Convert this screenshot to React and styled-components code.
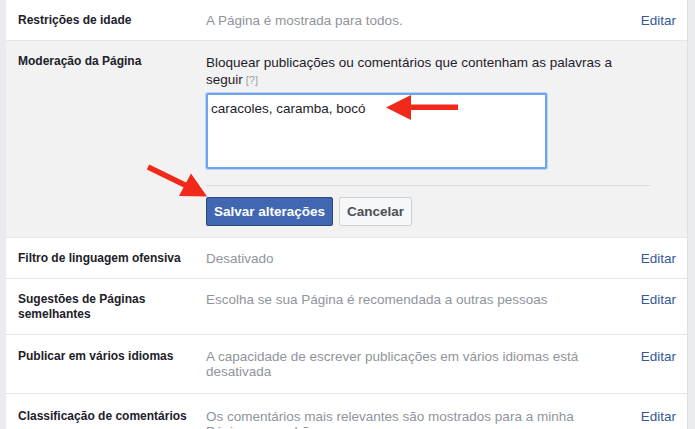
import React from 'react';
import styled, { createGlobalStyle } from 'styled-components';

const GlobalStyle = createGlobalStyle`
  html, body {
    margin: 0;
    padding: 0;
    background: #e9ebee;
    font-family: "Liberation Sans", Arial, Helvetica, sans-serif;
    -webkit-font-smoothing: antialiased;
  }
`;

const Page = styled.div`
  position: relative;
  width: 695px;
  height: 429px;
  overflow: hidden;
  background: #e9ebee;
`;

// painel branco com as linhas de configuração
const Panel = styled.div`
  margin-left: 6px;
  width: 681px;
  background: #fff;
  border-right: 1px solid #dddfe2;
  min-height: 429px;
`;

const Row = styled.div`
  display: flex;
  align-items: flex-start;
  padding: ${p => p.$top || 13}px 11px ${p => p.$bottom || 12}px 12px;
  border-bottom: 1px solid #e5e5e5;
  background: ${p => (p.$open ? '#f2f2f2' : '#fff')};
  font-size: 12px;
  line-height: 15px;
`;

const Label = styled.div`
  width: 188px;
  flex-shrink: 0;
  font-weight: bold;
  color: #1d2129;
  padding-right: 12px;
  box-sizing: border-box;
`;

const Value = styled.div`
  width: 412px;
  color: #90949c;
  font-size: 13.5px;
`;

const Edit = styled.a`
  margin-left: auto;
  color: #365899;
  font-size: 13.5px;
  cursor: pointer;
`;

// área de edição aberta
const Editor = styled.div`
  flex: 1;
  margin-right: 25px;
  display: flex;
  flex-direction: column;
`;

const Description = styled.div`
  color: #1d2129;
  font-size: 13.5px;
  line-height: 17px;
  width: 420px;
`;

const Help = styled.span`
  display: inline-block;
  color: #a0a4ab;
  font-size: 11px;
  line-height: 12px;
  margin-left: 3px;
`;

const Words = styled.textarea`
  margin-top: 5px;
  width: 341px;
  height: 76px;
  box-sizing: border-box;
  resize: none;
  border: 2px solid #6fa3ea;
  box-shadow: 0 0 0 1px #b9d3f5;
  border-radius: 2px;
  padding: 6px 3px;
  font-family: "Liberation Sans", Arial, sans-serif;
  font-size: 13.5px;
  line-height: 15px;
  color: #1d2129;
  outline: none;
`;

const Divider = styled.div`
  margin-top: 16px;
  height: 1px;
  background: #dddfe2;
`;

const Buttons = styled.div`
  margin-top: 11px;
  display: flex;
  gap: 6px;
`;

const Button = styled.button`
  height: 29px;
  padding: 0 7px;
  border-radius: 2px;
  font-family: "Liberation Sans", Arial, sans-serif;
  font-weight: bold;
  font-size: 13.5px;
  border: 1px solid ${p => (p.$primary ? '#29487d' : '#ced0d4')};
  background: ${p => (p.$primary ? '#4267b2' : '#f6f7f9')};
  color: ${p => (p.$primary ? '#fff' : '#4b4f56')};
`;

const Arrow = styled.svg`
  position: absolute;
  left: 0;
  top: 0;
  pointer-events: none;
`;

const rows = [
  { label: 'Filtro de linguagem ofensiva', value: 'Desativado' },
  { label: 'Sugestões de Páginas semelhantes', value: 'Escolha se sua Página é recomendada a outras pessoas' },
  { label: 'Publicar em vários idiomas', value: 'A capacidade de escrever publicações em vários idiomas está desativada', top: 14, bottom: 14 },
  { label: 'Classificação de comentários', value: 'Os comentários mais relevantes são mostrados para a minha Página por padrão', top: 15 },
];

export default function App() {
  return (
    <Page>
      <GlobalStyle />
      <Panel>
        <Row>
          <Label>Restrições de idade</Label>
          <Value>A Página é mostrada para todos.</Value>
          <Edit>Editar</Edit>
        </Row>
        <Row $open $bottom={11}>
          <Label>Moderação da Página</Label>
          <Editor>
            <Description>
              Bloquear publicações ou comentários que contenham as palavras a seguir<Help>[?]</Help>
            </Description>
            <Words defaultValue="caracoles, caramba, bocó" />
            <Divider />
            <Buttons>
              <Button $primary>Salvar alterações</Button>
              <Button>Cancelar</Button>
            </Buttons>
          </Editor>
        </Row>
        {rows.map(r => (
          <Row key={r.label} $top={r.top} $bottom={r.bottom}>
            <Label>{r.label}</Label>
            <Value>{r.value}</Value>
            <Edit>Editar</Edit>
          </Row>
        ))}
      </Panel>
      <Arrow width="695" height="429" viewBox="0 0 695 429">
        <g fill="#f0291b" stroke="none">
          <rect x="405" y="104.5" width="53" height="5.5" />
          <polygon points="386,107.5 411,95 411,120" />
          <line x1="148" y1="167" x2="187" y2="186" stroke="#f0291b" strokeWidth="5.5" strokeLinecap="butt" />
          <polygon points="207,196.5 191,173.5 179,196" />
        </g>
      </Arrow>
    </Page>
  );
}
